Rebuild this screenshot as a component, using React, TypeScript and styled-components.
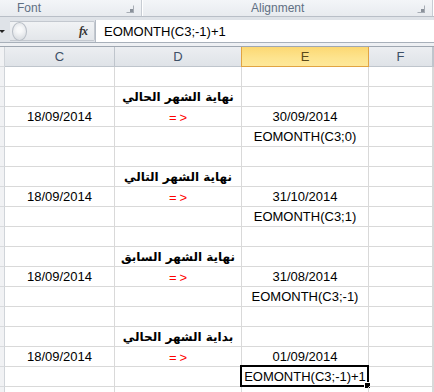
import { Fragment } from "react";
import styled, { createGlobalStyle } from "styled-components";

const GlobalStyle = createGlobalStyle`
  body {
    margin: 0;
    background: #ffffff;
    font-family: "Liberation Sans", Arial, sans-serif;
    overflow: hidden;
  }
`;

const Window = styled.div`
  width: 434px;
  height: 392px;
  overflow: hidden;
  background: #ffffff;
`;

const Ribbon = styled.div`
  display: flex;
  height: 16px;
  background: linear-gradient(#f3f5f8, #e8ebef);
  border-bottom: 1px solid #b9bfc7;
`;

const Group = styled.div<{ $width: number; $pad: number }>`
  position: relative;
  width: ${(p) => p.$width}px;
  flex: none;
  display: flex;
  align-items: center;
  padding-left: ${(p) => p.$pad}px;
  box-sizing: border-box;
  border-right: 1px solid #c7ccd3;
  box-shadow: 1px 0 0 #ffffff;
  font-size: 12px;
  color: #5f6f83;
`;

const Launcher = styled.span`
  position: absolute;
  right: 7px;
  top: 5px;
  width: 6px;
  height: 6px;
  border: 1px solid #a7adb5;
  border-top-color: transparent;
  border-left-color: transparent;
  &::after {
    content: "";
    position: absolute;
    right: 0;
    bottom: 0;
    width: 3px;
    height: 3px;
    background: #8a919a;
  }
`;

const Strip = styled.div`
  height: 3px;
  background: #dfe3e8;
`;

const FormulaBar = styled.div`
  display: flex;
  height: 22px;
  background: #dfe3e8;
  border-bottom: 1px solid #a8b0ba;
`;

const NameTail = styled.div`
  width: 10px;
  flex: none;
  display: flex;
  align-items: center;
`;

const Arrow = styled.span`
  width: 0;
  height: 0;
  border-left: 3px solid transparent;
  border-right: 3px solid transparent;
  border-top: 3px solid #222;
  margin-left: -1px;
`;

const ButtonPanel = styled.div`
  width: 85px;
  flex: none;
  display: flex;
  align-items: center;
  justify-content: space-between;
  padding: 0 7px 0 1px;
  box-sizing: border-box;
  background: linear-gradient(#f1f3f5, #e3e6ea);
  border: 1px solid #c3c8cf;
  border-left: none;
  border-radius: 0 2px 2px 0;
  margin: 1px 0;
`;

const Knob = styled.span`
  width: 13px;
  height: 17px;
  border-radius: 50%;
  border: 1px solid #b8bec6;
  background: radial-gradient(circle at 50% 40%, #f8f9fa 20%, #dfe2e6 70%);
  margin-left: 1px;
`;

const Fx = styled.span`
  font-family: "Liberation Serif", "Times New Roman", serif;
  font-style: italic;
  font-weight: bold;
  font-size: 12px;
  color: #333;
  letter-spacing: -1px;
`;

const FormulaInput = styled.div`
  flex: 1;
  background: #ffffff;
  border-left: 1px solid #b5bcc5;
  display: flex;
  align-items: center;
  padding-left: 8px;
  font-size: 13px;
  color: #000;
`;

const Gap = styled.div`
  height: 3px;
  background: #eef0f3;
  border-bottom: 1px solid #9fa7b1;
`;

const Sheet = styled.div`
  display: grid;
  grid-template-columns: 5px 110px 127px 127px 64px 1fr;
  grid-auto-rows: 20px;
`;

const ColHead = styled.div<{ $active?: boolean }>`
  display: flex;
  align-items: center;
  justify-content: center;
  font-size: 13px;
  color: ${(p) => (p.$active ? "#5b4a1a" : "#3d4f66")};
  box-sizing: border-box;
  background: ${(p) =>
    p.$active
      ? "linear-gradient(#fcd873, #fde48f 60%, #fee89a)"
      : "linear-gradient(#eceef1, #dfe3e8)"};
  border-right: 1px solid ${(p) => (p.$active ? "#e1a442" : "#bfc5cc")};
  border-bottom: 1px solid ${(p) => (p.$active ? "#e1a442" : "#bfc5cc")};
  ${(p) => (p.$active ? "border-left: 1px solid #e1a442; margin-left: -1px;" : "")}
`;

const RowHead = styled.div`
  box-sizing: border-box;
  background: #f1f2f4;
  border-right: 1px solid #d0d4d9;
  border-bottom: 1px solid #d8dadd;
`;

const Cell = styled.div<{ $tone?: "title" | "arrow" }>`
  position: relative;
  box-sizing: border-box;
  border-right: 1px solid #d9d9d9;
  border-bottom: 1px solid #d9d9d9;
  display: flex;
  align-items: center;
  justify-content: center;
  white-space: nowrap;
  font-size: 13px;
  color: ${(p) => (p.$tone === "arrow" ? "#ff0000" : "#000")};
  ${(p) =>
    p.$tone === "title" &&
    `font-family: "DejaVu Sans", sans-serif; font-weight: bold; font-size: 12px; direction: rtl;`}
  ${(p) => p.$tone === "arrow" && `letter-spacing: 3px; padding: 1px 0 0 3px;`}
`;

const Selection = styled.div`
  position: absolute;
  left: -2px;
  top: -2px;
  right: -1px;
  bottom: -1px;
  border: 2px solid #000;
  pointer-events: none;
  &::after {
    content: "";
    position: absolute;
    right: -4px;
    bottom: -4px;
    width: 5px;
    height: 5px;
    background: #000;
    border: 1px solid #fff;
  }
`;

type Row = { c?: string; d?: string; e?: string; title?: boolean; selected?: boolean };

const block = (title: string, result: string, formula: string): Row[] => [
  {},
  { d: title, title: true },
  { c: "18/09/2014", d: "=>", e: result },
  { e: formula },
];

const rows: Row[] = [
  ...block("نهاية الشهر الحالي", "30/09/2014", "EOMONTH(C3;0)"),
  ...block("نهاية الشهر التالي", "31/10/2014", "EOMONTH(C3;1)"),
  ...block("نهاية الشهر السابق", "31/08/2014", "EOMONTH(C3;-1)"),
  ...block("بداية الشهر الحالي", "01/09/2014", "EOMONTH(C3;-1)+1"),
  {},
];
rows[15].selected = true;

export default function App() {
  return (
    <Window>
      <GlobalStyle />
      <Ribbon>
        <Group $width={142} $pad={17}>
          Font
          <Launcher />
        </Group>
        <Group $width={291} $pad={109}>
          Alignment
          <Launcher />
        </Group>
      </Ribbon>
      <Strip />
      <FormulaBar>
        <NameTail>
          <Arrow />
        </NameTail>
        <ButtonPanel>
          <Knob />
          <Fx>fx</Fx>
        </ButtonPanel>
        <FormulaInput>EOMONTH(C3;-1)+1</FormulaInput>
      </FormulaBar>
      <Gap />
      <Sheet>
        <RowHead />
        <ColHead>C</ColHead>
        <ColHead>D</ColHead>
        <ColHead $active>E</ColHead>
        <ColHead>F</ColHead>
        <ColHead />
        {rows.map((r, i) => (
          <Fragment key={i}>
            <RowHead />
            <Cell>{r.c}</Cell>
            <Cell $tone={r.title ? "title" : r.d ? "arrow" : undefined}>{r.d}</Cell>
            <Cell>
              {r.e}
              {r.selected && <Selection />}
            </Cell>
            <Cell />
            <Cell />
          </Fragment>
        ))}
      </Sheet>
    </Window>
  );
}
